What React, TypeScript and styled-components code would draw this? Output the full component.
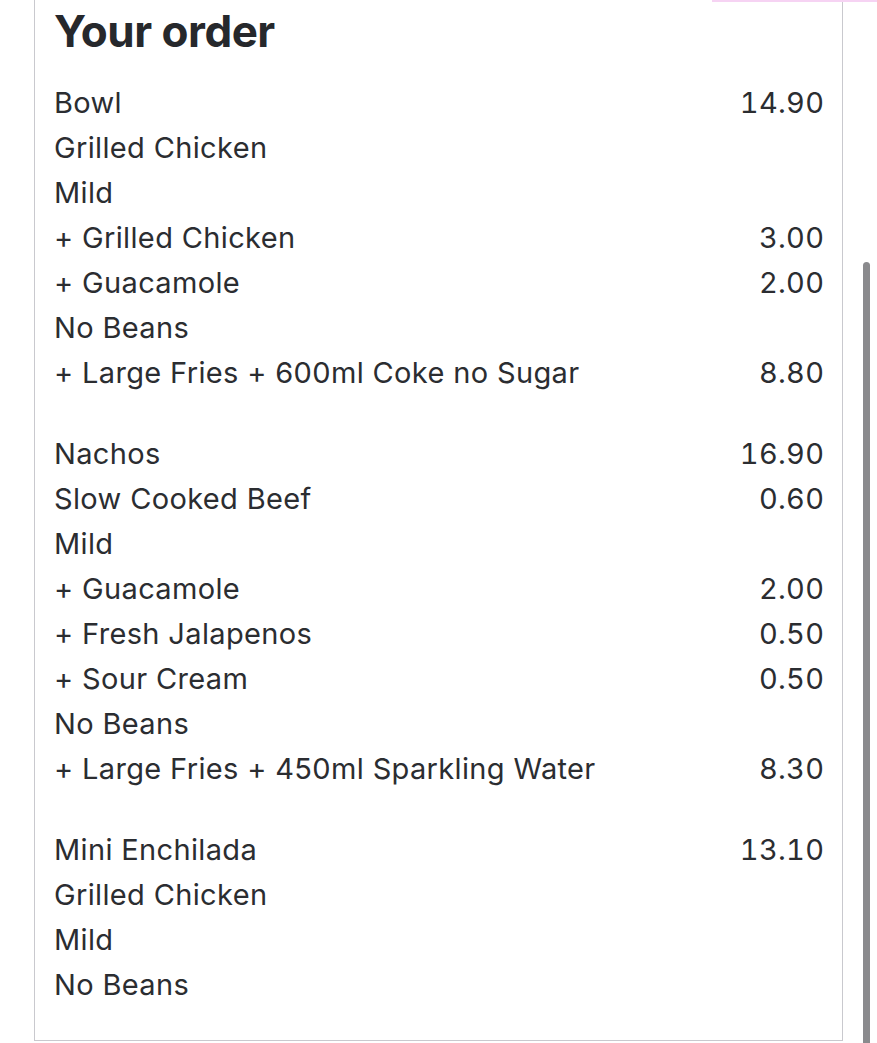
import React from "react";
import styled, { createGlobalStyle } from "styled-components";

interface ILine {
  label: string;
  price?: string;
}

const order: ILine[][] = [
  [
    { label: "Bowl", price: "14.90" },
    { label: "Grilled Chicken" },
    { label: "Mild" },
    { label: "+ Grilled Chicken", price: "3.00" },
    { label: "+ Guacamole", price: "2.00" },
    { label: "No Beans" },
    { label: "+ Large Fries + 600ml Coke no Sugar", price: "8.80" },
  ],
  [
    { label: "Nachos", price: "16.90" },
    { label: "Slow Cooked Beef", price: "0.60" },
    { label: "Mild" },
    { label: "+ Guacamole", price: "2.00" },
    { label: "+ Fresh Jalapenos", price: "0.50" },
    { label: "+ Sour Cream", price: "0.50" },
    { label: "No Beans" },
    { label: "+ Large Fries + 450ml Sparkling Water", price: "8.30" },
  ],
  [
    { label: "Mini Enchilada", price: "13.10" },
    { label: "Grilled Chicken" },
    { label: "Mild" },
    { label: "No Beans" },
  ],
];

const GlobalStyle = createGlobalStyle`
  html, body {
    margin: 0;
    padding: 0;
    background: #ffffff;
    overflow: hidden;
  }
  body {
    font-family: Inter, "Noto Sans", sans-serif;
    color: #2b2d31;
  }
`;

const Page = styled.div`
  position: relative;
  height: 1043px;
  padding-left: 34px;
  box-sizing: border-box;
`;

const TopAccent = styled.div`
  position: absolute;
  top: 0;
  right: 0;
  width: 165px;
  height: 2px;
  background: #f6d3f3;
`;

const Card = styled.section`
  width: 809px;
  height: 1041px;
  box-sizing: border-box;
  border: 1.5px solid #c9c9ce;
  border-top: none;
  padding: 0 18px 0 19px;
`;

const Title = styled.h1`
  margin: 0;
  height: 80px;
  padding-top: 6px;
  box-sizing: border-box;
  font-size: 44px;
  font-weight: 700;
  letter-spacing: -0.5px;
  line-height: 50px;
  color: #26282c;
`;

const Group = styled.div`
  display: flex;
  flex-direction: column;
  margin-bottom: 36px;
`;

const Row = styled.div`
  display: flex;
  justify-content: space-between;
  align-items: center;
  height: 45px;
  font-size: 29px;
  font-weight: 400;
  letter-spacing: 0.35px;
  color: #2b2d31;
`;

const Price = styled.span`
  font-variant-numeric: tabular-nums;
  letter-spacing: 0.3px;
  margin-right: -0.3px;
`;

const Scrollbar = styled.div`
  position: absolute;
  left: 863px;
  top: 262px;
  width: 7px;
  height: 790px;
  border-radius: 4px;
  background: #8a8a8d;
`;

const App: React.FC = () => {
  return (
    <>
      <GlobalStyle />
      <Page>
        <TopAccent />
        <Card>
          <Title>Your order</Title>
          {order.map((group, gi) => (
            <Group key={gi}>
              {group.map((line, li) => (
                <Row key={li}>
                  <span>{line.label}</span>
                  {line.price && <Price>{line.price}</Price>}
                </Row>
              ))}
            </Group>
          ))}
        </Card>
        <Scrollbar />
      </Page>
    </>
  );
};

export default App;
